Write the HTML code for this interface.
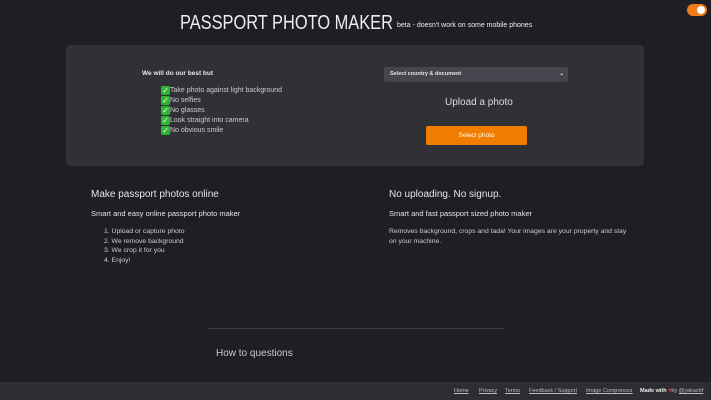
<!DOCTYPE html>
<html><head><style>
body{margin:0;width:711px;height:400px;overflow:hidden;background:#1e1e25;font-family:"Liberation Sans",sans-serif;color:#e6e6e6;position:relative}
.a{position:absolute;white-space:nowrap}
.panel{position:absolute;left:66px;top:45px;width:578px;height:121px;background:#303037;border-radius:4px}
.ck{display:inline-block;width:9px;height:9px;background:#2fb52f;border-radius:2px;color:#fff;font-size:8px;line-height:9px;text-align:center;vertical-align:-1px}
.foot{position:absolute;left:0;top:382px;width:711px;height:18px;background:#2d2d34}
.foot span{position:absolute;top:6px;font-size:5.5px;color:#bbb;text-decoration:underline}
</style></head><body>
<div class="a" style="left:180px;top:12px;font-size:20px;color:#eee;transform:scaleX(0.82);transform-origin:left top">PASSPORT PHOTO MAKER</div>
<div class="a" style="left:397px;top:22px;font-size:7px;color:#eee">beta - doesn't work on some mobile phones</div>
<div class="a" style="left:687px;top:4px;width:20px;height:12px;border-radius:6px;background:#f07c1b"><div style="position:absolute;right:2px;top:2px;width:8px;height:8px;border-radius:50%;background:#fff"></div></div>
<div class="panel"></div>
<div class="a" style="left:142px;top:70px;font-size:6.5px;font-weight:bold">We will do our best but</div>
<div class="a" style="left:161px;top:86px;font-size:7px;line-height:10px;color:#ccc">
<div><span class="ck">✓</span>Take photo against light background</div>
<div><span class="ck">✓</span>No selfies</div>
<div><span class="ck">✓</span>No glasses</div>
<div><span class="ck">✓</span>Look straight into camera</div>
<div><span class="ck">✓</span>No obvious smile</div></div>
<div class="a" style="left:384px;top:67px;width:184px;height:15px;background:#45454d;border-radius:2px;font-size:5.5px;font-weight:bold;line-height:15px;text-indent:6px">Select country &amp; document<span style="position:absolute;right:4px">⌄</span></div>
<div class="a" style="left:445px;top:97px;font-size:10px;color:#ddd">Upload a photo</div>
<div class="a" style="left:426px;top:126px;width:101px;height:19px;background:#f07c00;border-radius:2px;font-size:6.5px;color:#fff;text-align:center;line-height:19px">Select photo</div>
<div class="a" style="left:91px;top:189px;font-size:10px">Make passport photos online</div>
<div class="a" style="left:91px;top:209px;font-size:7.5px">Smart and easy online passport photo maker</div>
<div class="a" style="left:104px;top:227px;font-size:6.8px;line-height:9.5px;color:#ccc">1. Upload or capture photo<br>2. We remove background<br>3. We crop it for you<br>4. Enjoy!</div>
<div class="a" style="left:389px;top:189px;font-size:10px">No uploading. No signup.</div>
<div class="a" style="left:389px;top:209px;font-size:7.5px">Smart and fast passport sized photo maker</div>
<div class="a" style="left:389px;top:227px;font-size:6.8px;line-height:10px;color:#ccc">Removes background, crops and tada! Your images are your property and stay<br>on your machine.</div>
<div class="a" style="left:208px;top:328px;width:296px;height:1px;background:#3a3a42"></div>
<div class="a" style="left:216px;top:348px;font-size:10px;color:#ccc">How to questions</div>
<div class="foot">
<span style="left:454px">Home</span><span style="left:479px">Privacy</span><span style="left:505px">Terms</span><span style="left:529px">Feedback / Support</span><span style="left:586px">Image Compressor</span>
<span style="left:640px;text-decoration:none;color:#eee;font-weight:bold">Made with <span style="position:static;color:#e33;text-decoration:none">♥</span><span style="position:static;font-weight:normal;color:#bbb;text-decoration:none">by</span> <span style="position:static;font-weight:normal;color:#bbb">@yakashf</span></span>
</div>
</body></html>
